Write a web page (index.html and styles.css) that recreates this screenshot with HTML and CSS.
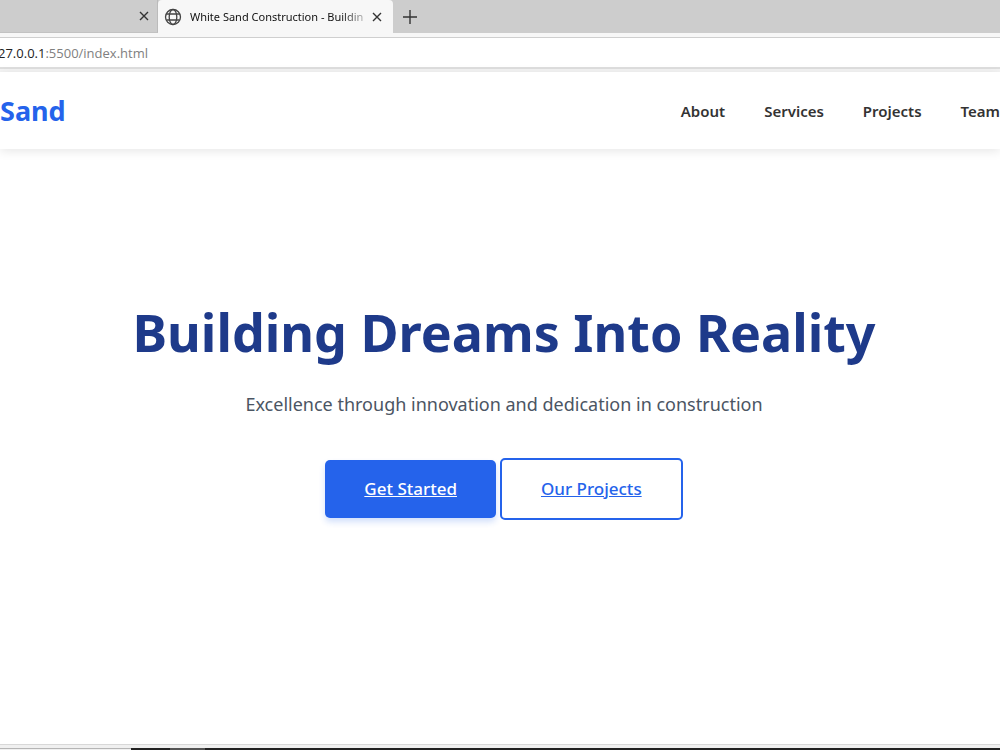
FILE: index.html
```
<!DOCTYPE html>
<html lang="en">
<head>
  <meta charset="UTF-8" />
  <meta name="viewport" content="width=device-width, initial-scale=1.0" />
  <title>White Sand Construction - Building Dreams</title>
  <link rel="stylesheet" href="styles.css">
</head>
<body>
  <div class="tab-bar">
    <div class="tab tab-previous">
      <button class="icon-btn" aria-label="Close tab">
        <svg width="10" height="10" viewBox="0 0 10 10"><path d="M1 1l8 8M9 1l-8 8" /></svg>
      </button>
    </div>
    <div class="tab tab-active">
      <svg class="globe" width="18" height="18" viewBox="0 0 18 18">
        <circle cx="9" cy="9" r="7.5" />
        <ellipse cx="9" cy="9" rx="3.8" ry="7.5" />
        <path d="M2.3 6h13.4M2.3 12h13.4" />
      </svg>
      <span class="tab-title">White Sand Construction - Buildin</span>
      <button class="icon-btn" aria-label="Close tab">
        <svg width="10" height="10" viewBox="0 0 10 10"><path d="M1 1l8 8M9 1l-8 8" /></svg>
      </button>
    </div>
    <button class="icon-btn new-tab" aria-label="New tab">
      <svg width="14" height="14" viewBox="0 0 14 14"><path d="M7 0v14M0 7h14" /></svg>
    </button>
  </div>
  <div class="address-bar" role="textbox" aria-label="Address" contenteditable="true" spellcheck="false"><span class="host">27.0.0.1</span>:5500/index.html</div>

  <header class="header">
    <a class="logo" href="#">Sand</a>
    <nav class="nav">
      <a href="#about">About</a>
      <a href="#services">Services</a>
      <a href="#projects">Projects</a>
      <a href="#team">Team</a>
    </nav>
  </header>

  <main class="hero">
    <h1>Building Dreams Into Reality</h1>
    <p>Excellence through innovation and dedication in construction</p>
    <div class="hero-buttons">
      <a class="btn btn-primary" href="#contact">Get Started</a>
      <a class="btn btn-outline" href="#projects">Our Projects</a>
    </div>
  </main>

  <div class="window-edge"></div>
  <div class="taskbar">
    <div class="taskbar-search"></div>
    <div class="taskbar-item"></div>
  </div>
</body>
</html>
```
FILE: styles.css
```
* { box-sizing: border-box; }
body {
  margin: 0;
  min-height: 100vh;
  display: flex;
  flex-direction: column;
  background: white;
  font-family: "Noto Sans", "Open Sans", sans-serif;
  overflow-x: hidden;
}

/* browser chrome */
.tab-bar {
  display: flex;
  height: 38px;
  background: linear-gradient(#cdcdcd 33px, #f7f7f7 33px);
  border-bottom: 1px solid #cfcfcf;
}
.tab {
  display: flex;
  align-items: center;
  height: 33px;
}
.tab-previous {
  width: 158px;
  padding-right: 8px;
  justify-content: flex-end;
  border-right: 1px solid #bbb;
  border-bottom: 1px solid #c2c2c2;
}
.tab-active {
  width: 235px;
  padding: 0 11px 0 6px;
  background: #f7f7f7;
  border-radius: 4px 4px 0 0;
}
.tab-title {
  flex: 1;
  min-width: 0;
  margin: 0 8px;
  overflow: hidden;
  white-space: nowrap;
  font-size: 11px;
  color: #111;
  -webkit-mask-image: linear-gradient(to right, #000 87%, transparent 105%);
  mask-image: linear-gradient(to right, #000 87%, transparent 105%);
}
.globe {
  fill: none;
  stroke: #444;
  stroke-width: 1.3;
}
.icon-btn {
  display: flex;
  padding: 0;
  border: none;
  background: none;
  cursor: pointer;
}
.icon-btn svg {
  fill: none;
  stroke: #333;
  stroke-width: 1.4;
}
.new-tab {
  height: 33px;
  padding: 0 10px;
  align-items: center;
}
.address-bar {
  height: 34px;
  line-height: 30px;
  font-family: "Open Sans", sans-serif;
  font-size: 13px;
  text-indent: -2px;
  color: #808080;
  background: linear-gradient(white 29px, #dedede 29px, #dedede 31px, #f4f4f4 31px);
  outline: none;
}
.address-bar .host { color: #222; }

/* site */
.header {
  display: flex;
  align-items: center;
  justify-content: space-between;
  height: 77px;
  background: white;
  box-shadow: 0 2px 10px rgba(0, 0, 0, 0.1);
}
.logo {
  font-size: 27px;
  font-weight: 700;
  color: #2563eb;
  text-decoration: none;
}
.nav {
  display: flex;
  gap: 39px;
}
.nav a {
  font-size: 15px;
  font-weight: 600;
  color: #333;
  text-decoration: none;
}
.hero {
  flex: 1;
  display: flex;
  flex-direction: column;
  align-items: center;
  justify-content: center;
  padding: 0 16px 74px 24px;
  text-align: center;
}
.hero h1 {
  margin: 0 0 26px;
  font-size: 52px;
  line-height: 64px;
  font-weight: 700;
  color: #1e3a8a;
}
.hero p {
  margin: 0 0 40px;
  font-size: 18px;
  line-height: 28px;
  color: #4b5563;
}
.hero-buttons {
  display: flex;
  align-items: center;
  gap: 4px;
}
.btn {
  padding: 16px 39px;
  font-size: 17px;
  line-height: 26px;
  font-weight: 500;
  border-radius: 5px;
}
.btn-primary {
  color: white;
  background: #2563eb;
  box-shadow: 0 4px 6px rgba(37, 99, 235, 0.2);
}
.btn-outline {
  color: #2563eb;
  border: 2px solid #2563eb;
}

.window-edge {
  height: 4px;
  background: #f0f0f0;
  border-top: 1px solid #d8d8d8;
}
.taskbar {
  display: flex;
  height: 2px;
  background: #222;
}
.taskbar-search {
  width: 131px;
  background: #f0f0f0;
  border-top: 1px solid #b5b5b5;
}
.taskbar-item {
  width: 35px;
  margin-left: 39px;
  background: #555;
}
```
